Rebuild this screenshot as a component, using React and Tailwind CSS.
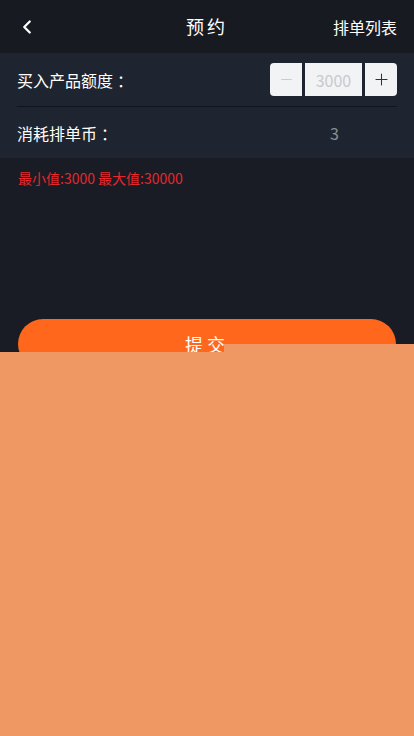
import { ChevronLeft, Minus, Plus } from "lucide-react";

const App = () => {
    return (
        <div className="relative w-[414px] h-[736px] overflow-hidden bg-[#191c24] font-['Noto_Sans_CJK_SC','Noto_Sans',sans-serif] text-white">
            {/* header */}
            <div className="h-[53px] bg-[#171a20] flex items-center px-[16px] relative">
                <ChevronLeft className="w-[22px] h-[22px] text-white" strokeWidth={2.5} />
                <div className="absolute left-0 right-0 text-center text-[18px] tracking-[3px] pointer-events-none">预约</div>
                <div className="ml-auto text-[16px] pr-[1px]">排单列表</div>
            </div>

            {/* form */}
            <div className="bg-[#1f2530] px-[17px]">
                <div className="h-[54px] flex items-center border-b border-[#12151b]">
                    <span className="text-[16px]">买入产品额度<span className="ml-[4px]">：</span></span>
                    <div className="ml-auto flex items-center gap-[3px]">
                        <button className="w-[32px] h-[33px] bg-[#f2f3f5] rounded-l-[4px] flex items-center justify-center">
                            <Minus className="w-[17px] h-[17px] text-[#c8c9cc]" strokeWidth={1.3} />
                        </button>
                        <div className="w-[57px] h-[33px] bg-[#f2f3f5] flex items-center justify-center text-[16px] text-[#c8c9cc]">3000</div>
                        <button className="w-[32px] h-[33px] bg-[#f2f3f5] rounded-r-[4px] flex items-center justify-center">
                            <Plus className="w-[19px] h-[19px] text-[#323233]" strokeWidth={1.3} />
                        </button>
                    </div>
                </div>
                <div className="h-[51px] flex items-center">
                    <span className="w-[313px] text-[16px]">消耗排单币<span className="ml-[4px]">：</span></span>
                    <span className="text-[16px] text-[#8a8d94]">3</span>
                </div>
            </div>

            <div className="px-[18px] pt-[10px] text-[14px] text-[#e8262b]">最小值:3000 最大值:30000</div>

            <div className="px-[18px] mt-[130px]">
                <button className="w-full h-[50px] rounded-full bg-[#ff681c] text-white text-[18px] tracking-[4px]">提交</button>
            </div>

            {/* overlay blocks */}
            <div className="absolute left-[224px] right-0 top-[344px] h-[10px] bg-[#ef9863]"></div>
            <div className="absolute left-0 right-0 top-[352px] bottom-0 bg-[#ef9863]"></div>
        </div>
    );
};

export default App;
